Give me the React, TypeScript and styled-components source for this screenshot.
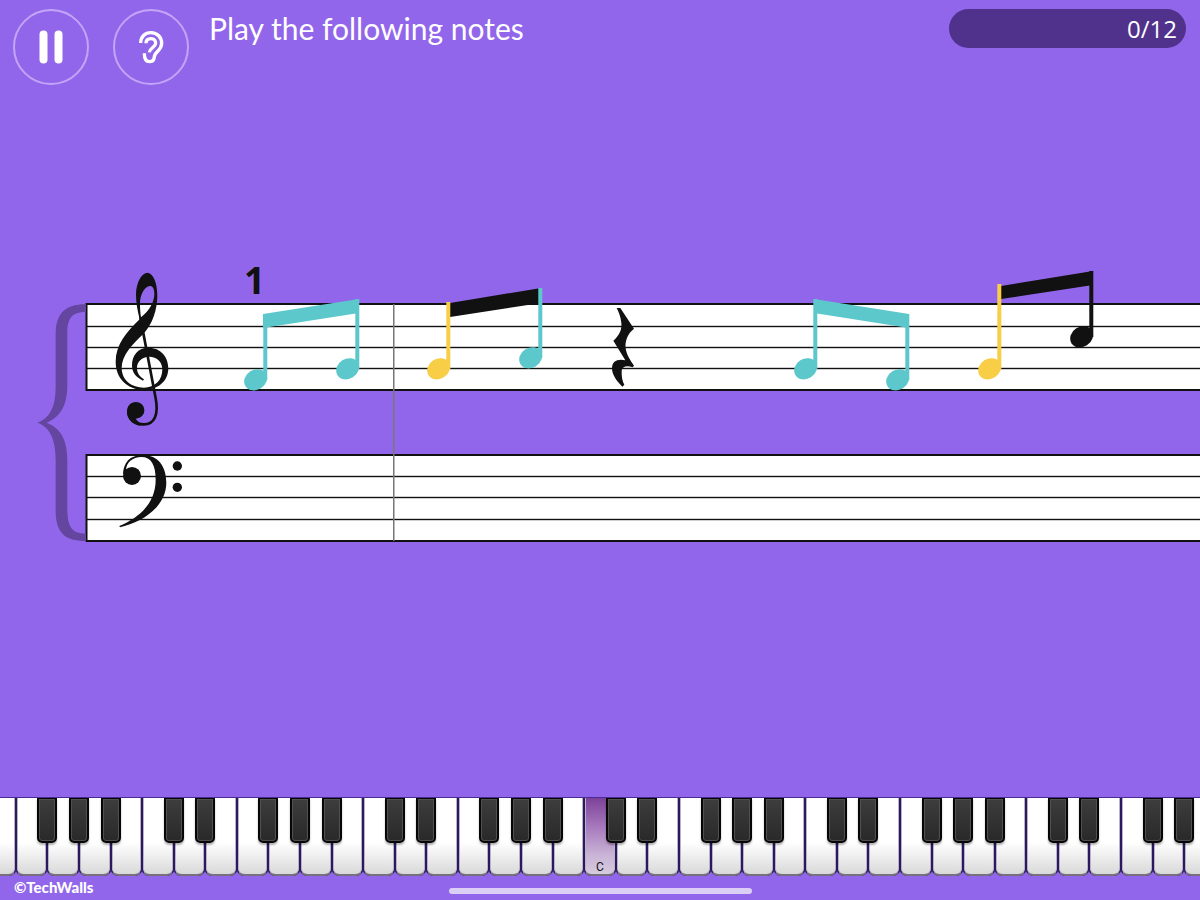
import React from 'react';
import styled, { createGlobalStyle } from 'styled-components';

const INK = '#111111';
const TEAL = '#5dc8cb';
const YELLOW = '#f7ce46';

const GlobalStyle = createGlobalStyle`
  *, *::before, *::after { box-sizing: border-box; }
  body {
    margin: 0;
    background: #9266eb;
    font-family: Lato, "Open Sans", sans-serif;
  }
`;

const Screen = styled.div`
  display: flex;
  flex-direction: column;
  min-height: 100vh;
  overflow: hidden;
  color: #ffffff;
`;

const Header = styled.header`
  display: flex;
  align-items: flex-start;
  gap: 24px;
  padding: 9px 14px 9px 13px;
`;

const RoundButton = styled.button`
  display: grid;
  place-items: center;
  flex: none;
  width: 76px;
  height: 76px;
  padding: 0;
  border: 2px solid #c3a5f8;
  border-radius: 50%;
  background: transparent;
  color: inherit;
  cursor: pointer;
`;

const Prompt = styled.h1`
  flex: 1;
  margin: 0 0 0 -4px;
  font-size: 30px;
  font-weight: 400;
  line-height: 38px;
`;

const Counter = styled.div`
  flex: none;
  width: 237px;
  padding-right: 9px;
  border-radius: 20px;
  background: #50328d;
  font-family: "Open Sans", sans-serif;
  font-size: 24px;
  line-height: 39px;
  text-align: right;
`;

const Stage = styled.main`
  display: flex;
  flex: 1;
  flex-direction: column;
  justify-content: center;
  padding-bottom: 77px;
`;

const Score = styled.svg`
  display: block;
  width: 100%;
  height: 330px;
`;

const Keyboard = styled.section`
  overflow: hidden;
  border-top: 1px solid #4a2a93;
`;

const Keys = styled.div`
  display: grid;
  grid-template-columns: repeat(39, 1fr);
  width: calc(100% * 39 / 38);
  margin-left: calc(-100% / 76);
`;

const KeySlot = styled.div`
  position: relative;
  height: 78px;
  border-radius: 0 0 7px 7px;
  background: #2c1762;
`;

const WhiteKey = styled.button<{ $active: boolean }>`
  display: flex;
  align-items: flex-end;
  justify-content: center;
  width: 100%;
  height: 100%;
  padding: 0 0 1px;
  border: solid #2c1762;
  border-width: 0 1px 2px;
  border-bottom-color: #77717f;
  border-radius: 0 0 7px 7px;
  background: ${(p) =>
    p.$active
      ? 'linear-gradient(#7d4298, #a97cbf 40%, #c9b4d6 75%, #d6cbdd)'
      : 'linear-gradient(#ffffff 58%, #d9d9d9)'};
  box-shadow: inset 1px 0 #b9b4c4, inset -1px 0 #b9b4c4;
  color: #111111;
  font-family: Roboto, sans-serif;
  font-size: 12px;
  line-height: 12px;
`;

const BlackKey = styled.button`
  position: absolute;
  z-index: 1;
  top: 0;
  right: -10px;
  width: 20px;
  height: 45px;
  padding: 0;
  border: 2px solid #060606;
  border-top-width: 1px;
  border-radius: 0 0 5px 5px;
  background: linear-gradient(#3d3d3d, #292929);
  box-shadow: inset 0 0 0 1px #505050, 0 2px 2px rgba(0, 0, 0, 0.3);
`;

const Footer = styled.footer`
  display: grid;
  grid-template-columns: 1fr 303px 1fr;
  height: 24px;
  padding: 0 14px;
`;

const Credit = styled.small`
  font-size: 15px;
  font-weight: 900;
  line-height: 23px;
`;

const HomeBar = styled.div`
  height: 6px;
  margin-top: 12px;
  border-radius: 3px;
  background: #dccff5;
`;

const TREBLE_LINES = [64, 85, 106];
const BASS_LINES = [214, 235, 257];

const NOTES = [
  { x: 256, y: 118, top: 52, color: TEAL },
  { x: 348, y: 107, top: 37, color: TEAL },
  { x: 439, y: 107, top: 40, color: YELLOW },
  { x: 531, y: 96, top: 26, color: TEAL },
  { x: 806, y: 107, top: 37, color: TEAL },
  { x: 898, y: 118, top: 52, color: TEAL },
  { x: 990, y: 107, top: 22, color: YELLOW },
  { x: 1082, y: 75, top: 9, color: INK },
];

const BEAMS = [
  { points: '263,52 359,37 359,51 263,66', color: TEAL },
  { points: '450,41 541,26 541,41 450,55', color: INK },
  { points: '814,37 909,52 909,66 814,51', color: TEAL },
  { points: '1001,24 1093,9 1093,23 1001,37', color: INK },
];

const BLACK_AFTER = ['C', 'D', 'F', 'G', 'A'];
const LETTERS = ['C', 'D', 'E', 'F', 'G', 'A', 'B'];
const MIDDLE_C = 19;
const WHITE_KEYS = Array.from({ length: 39 }, (_, i) => ({
  letter: LETTERS[(i - MIDDLE_C + 21) % 7],
  octave: 4 + Math.floor((i - MIDDLE_C) / 7),
  active: i === MIDDLE_C,
}));

function Staff({ top, bottom, lines }: { top: number; bottom: number; lines: number[] }) {
  return (
    <g>
      <rect x="86" y={top} width="100%" height={bottom - top} fill="#ffffff" />
      {lines.map((y) => (
        <rect key={y} x="86" y={y - 0.2} width="100%" height="1.4" fill={INK} />
      ))}
      <rect x="86" y={top - 1} width="100%" height="2" fill={INK} />
      <rect x="86" y={bottom - 1} width="100%" height="2" fill={INK} />
      <rect x="85.5" y={top - 1} width="2" height={bottom - top + 2} fill={INK} />
    </g>
  );
}

function Note({ x, y, top, color }: { x: number; y: number; top: number; color: string }) {
  return (
    <g fill={color}>
      <ellipse cx={x - 0.2} cy={y - 0.4} rx="12" ry="10" transform={`rotate(-32 ${x} ${y})`} />
      <rect x={x + 7.3} y={top} width="4" height={y - top} />
    </g>
  );
}

function Clefs() {
  return (
    <g transform="translate(30 -2) scale(0.3333)">
      <path
        fill="#64459f"
        d="M168 133C100 133 77 165 77 225V380C77 440 60 475 22 488C60 500 77 540 77 600V750C77 815 100 843 168 843V821C125 821 112 800 112 745V600C112 545 95 505 50 488C95 470 112 430 112 375V220C112 175 125 156 168 156Z"
      />
      <path
        fill={INK}
        fillRule="evenodd"
        d="M353 38C371 40 382 72 382 105C382 150 368 192 340 222C308 252 275 285 275 325C276 362 305 383 342 383C375 382 397 362 397 328C397 305 380 290 358 290C335 290 321 306 321 324C321 340 330 350 342 358L339 362C318 352 306 338 306 316C306 285 325 263 355 263C392 263 415 290 415 325C415 365 382 390 342 390C292 389 257 355 257 305C257 255 290 215 329 178C322 150 318 125 318 105C318 68 335 38 353 38ZM333 172C360 150 373 125 373 102C373 86 368 78 360 78C343 80 330 105 330 130C330 145 331 158 333 172Z"
      />
      <path
        fill="none"
        stroke={INK}
        strokeWidth="8"
        d="M331 172L377 415C386 462 375 493 341 493C318 493 300 482 295 458"
      />
      <path fill={INK} d="M291 455C291 438 302 426 318 426C333 426 343 437 343 451C343 465 333 474 317 476C322 484 330 489 338 490L330 497C306 492 291 476 291 455Z" />
      <path
        fill={INK}
        d="M279 645C279 608 300 585 338 585C385 585 409 620 409 668C409 732 350 783 270 802L268 798C340 768 377 720 377 660C377 615 364 591 334 591C308 591 288 607 288 632Z"
      />
      <circle cx="306" cy="648" r="27" fill={INK} />
      <circle cx="442" cy="618" r="14" fill={INK} />
      <circle cx="442" cy="682" r="14" fill={INK} />
    </g>
  );
}

export default function App() {
  return (
    <>
      <GlobalStyle />
      <Screen>
        <Header>
          <RoundButton type="button" aria-label="Pause">
            <svg width="24" height="34" viewBox="0 0 24 34" fill="currentColor" aria-hidden="true">
              <rect x="0.5" y="0.5" width="8" height="33" rx="4" />
              <rect x="15.5" y="0.5" width="8" height="33" rx="4" />
            </svg>
          </RoundButton>
          <RoundButton type="button" aria-label="Listen">
            <svg
              width="26"
              height="34"
              viewBox="414 90 78 102"
              fill="none"
              stroke="currentColor"
              strokeWidth="10"
              aria-hidden="true"
            >
              <path d="M422 129C422 110 435 98 453 98C472 98 485 112 485 130C485 153 463 155 463 171C462 181 456 185 448 185C438 185 433 178 433 160" />
              <path d="M438 130C438 121 444 116 453 116C462 116 467 122 467 130C467 141 449 144 448 157" />
            </svg>
          </RoundButton>
          <Prompt>Play the following notes</Prompt>
          <Counter>0/12</Counter>
        </Header>

        <Stage>
          <Score role="img" aria-label="Grand staff with the notes to play">
            <g transform="translate(0 20)">
              <Staff top={42} bottom={128} lines={TREBLE_LINES} />
              <Staff top={193} bottom={279} lines={BASS_LINES} />
              <rect x="393" y="42" width="1.5" height="237" fill="#777777" />
              <Clefs />
              <text x="244" y="32" fill={INK} fontFamily="Open Sans, sans-serif" fontSize="37" fontWeight="700">
                1
              </text>
              {BEAMS.map((b) => (
                <polygon key={b.points} points={b.points} fill={b.color} />
              ))}
              {NOTES.map((n) => (
                <Note key={n.x} {...n} />
              ))}
              <path
                transform="translate(606 38) scale(0.3333)"
                fill={INK}
                d="M32 24H43L84 86C65 100 56 125 59 145C62 165 72 180 84 197L80 202C62 195 48 200 47 212C46 230 50 245 55 254L49 260C30 242 18 222 18 205C18 183 35 176 58 181L22 122C40 105 48 90 46 68C44 50 38 35 32 24Z"
              />
            </g>
          </Score>
        </Stage>

        <Keyboard aria-label="Piano keyboard">
          <Keys>
            {WHITE_KEYS.map(({ letter, octave, active }) => (
              <KeySlot key={letter + octave}>
                <WhiteKey type="button" $active={active} aria-label={letter + octave}>
                  {active ? letter : null}
                </WhiteKey>
                {BLACK_AFTER.includes(letter) && (
                  <BlackKey type="button" aria-label={`${letter} sharp ${octave}`} />
                )}
              </KeySlot>
            ))}
          </Keys>
        </Keyboard>

        <Footer>
          <Credit>©TechWalls</Credit>
          <HomeBar />
        </Footer>
      </Screen>
    </>
  );
}
